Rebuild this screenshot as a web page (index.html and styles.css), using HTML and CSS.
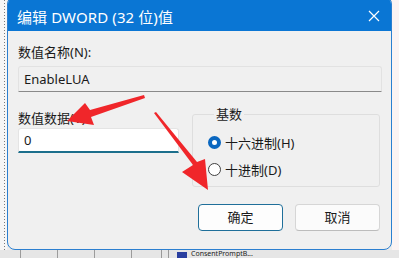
FILE: index.html
```html
<!DOCTYPE html>
<html lang="zh">
<head>
<meta charset="utf-8">
<link rel="stylesheet" href="styles.css">
</head>
<body>
<div class="screen">
  <div class="main-row">
    <div class="left-strip"><div class="dots"></div></div>
    <div class="dialog">
      <div class="titlebar">
        <span class="title">编辑 DWORD (32 位)值</span>
        <svg class="close" width="12" height="12" viewBox="0 0 12 12"><path d="M1 1 L11 11 M11 1 L1 11" stroke="#fff" stroke-width="1.2" fill="none"/></svg>
      </div>
      <div class="body">
        <div class="label first">数值名称(N):</div>
        <div class="field readonly">EnableLUA</div>
        <div class="row">
          <div class="col-left">
            <div class="label">数值数据(V):</div>
            <div class="field input">0</div>
          </div>
          <fieldset class="group">
            <legend>基数</legend>
            <div class="radio-item"><span class="radio checked"></span><span>十六进制(H)</span></div>
            <div class="radio-item"><span class="radio"></span><span>十进制(D)</span></div>
          </fieldset>
        </div>
        <div class="buttons">
          <div class="btn primary">确定</div>
          <div class="btn">取消</div>
        </div>
      </div>
    </div>
    <div class="right-strip"></div>
  </div>
  <div class="bottom-strip">
    <div class="dots-h"></div>
    <div class="vline"></div>
    <div class="vline"></div>
    <div class="reg-icon"></div>
    <span class="reg-text">ConsentPromptB...</span>
  </div>
  <svg class="arrows" width="399" height="258" viewBox="0 0 399 258">
    <polygon fill="#f0262a" points="144,95 90,110 85,103 67,121 94,125 91,117 145,98"/>
    <polygon fill="#f0262a" points="154,113 193,165 182,172 208,190 205,159 197,162 156,112"/>
  </svg>
</div>
</body>
</html>
```
FILE: styles.css
```css
* { box-sizing: border-box; }
html, body { margin: 0; padding: 0; }
body {
  width: 399px;
  height: 258px;
  overflow: hidden;
  font-family: "Noto Sans", "Noto Sans CJK SC", sans-serif;
  color: #1a1a1a;
  background: #ececec;
}
.screen { position: relative; width: 399px; height: 258px; overflow: hidden; }
.main-row { display: flex; height: 250px; }
.left-strip {
  width: 7px;
  background: #f6f6f6;
  display: flex;
  justify-content: flex-start;
  padding-left: 4px;
}
.dots {
  width: 1px;
  height: 100%;
  background: repeating-linear-gradient(to bottom, #7a7a7a 0 1px, transparent 1px 3px);
}
.right-strip { flex: 1; background: #fbf3f3; }
.dialog {
  width: 385px;
  height: 254px;
  margin-top: -4px;
  background: #f0f0f0;
  border: 1px solid #2b7fd0;
  border-radius: 8px;
  overflow: hidden;
  display: flex;
  flex-direction: column;
}
.titlebar {
  height: 34px;
  padding: 4px 10px 0 9px;
  background: #0a76d4;
  color: #fff;
  display: flex;
  align-items: center;
  justify-content: space-between;
  flex-shrink: 0;
}
.title { font-size: 15px; letter-spacing: 0.1px; }
.close { margin-right: 1px; }
.body { padding: 0 9px 0 10px; font-size: 13px; }
.label { height: 18px; line-height: 18px; }
.label.first { margin-top: 12px; }
.field {
  height: 26px;
  line-height: 24px;
  padding-left: 5px;
  font-size: 13px;
}
.readonly {
  margin-top: 5px;
  border: 1px solid #e2e2e2;
  border-bottom: 1px solid #8a8a8a;
  background: #f0f0f0;
  border-radius: 3px 3px 0 0;
}
.row { display: flex; gap: 13px; margin-top: 0; }
.col-left { width: 161px; padding-top: 17px; }
.input {
  margin-top: 1px;
  height: 25px;
  background: #fff;
  border: 1px solid #e4e4e4;
  border-bottom: 2px solid #1c6f8c;
  line-height: 22px;
  border-radius: 3px 3px 0 0;
}
.group {
  margin: 15px 0 0 0;
  padding: 11px 0 0 15px;
  width: 188px;
  height: 80px;
  border: 1px solid #dedede;
  border-radius: 3px;
}
.group legend {
  font-size: 13px;
  padding: 0 2px;
  margin-left: 6px;
  line-height: 14px;
}
.radio-item {
  display: flex;
  align-items: center;
  gap: 4px;
  height: 20px;
  margin-bottom: 7px;
}
.radio {
  width: 13px;
  height: 13px;
  border-radius: 50%;
  border: 1px solid #404040;
  background: #fff;
  display: inline-block;
}
.radio.checked {
  border: 4px solid #0a67c0;
  background: #fff;
}
.buttons {
  display: flex;
  gap: 12px;
  padding-left: 180px;
  margin-top: 17px;
}
.btn {
  width: 85px;
  height: 27px;
  line-height: 25px;
  text-align: center;
  font-size: 13px;
  background: #fbfbfb;
  border: 1px solid #d6d6d6;
  border-bottom-color: #bcbcbc;
  border-radius: 4px;
}
.btn.primary {
  border: 1px solid #1f6f9a;
  background: #fdfdfd;
}
.bottom-strip {
  height: 8px;
  background: #e6e6e6;
  display: flex;
  align-items: stretch;
  position: relative;
}
.dots-h {
  width: 155px;
  background: repeating-linear-gradient(to right, transparent 0 20px, #6a6a6a 20px 21px, transparent 21px 37px);
  opacity: 0.6;
}
.vline { width: 1px; background: #9a9a9a; margin-left: 6px; }
.reg-icon { width: 10px; height: 6px; margin: 2px 0 0 8px; background: #2a3fa0; }
.reg-text { font-size: 7px; line-height: 8px; height: 8px; margin: 0 0 0 4px; color: #222; white-space: nowrap; }
.arrows { position: absolute; left: 0; top: 0; pointer-events: none; }
```
